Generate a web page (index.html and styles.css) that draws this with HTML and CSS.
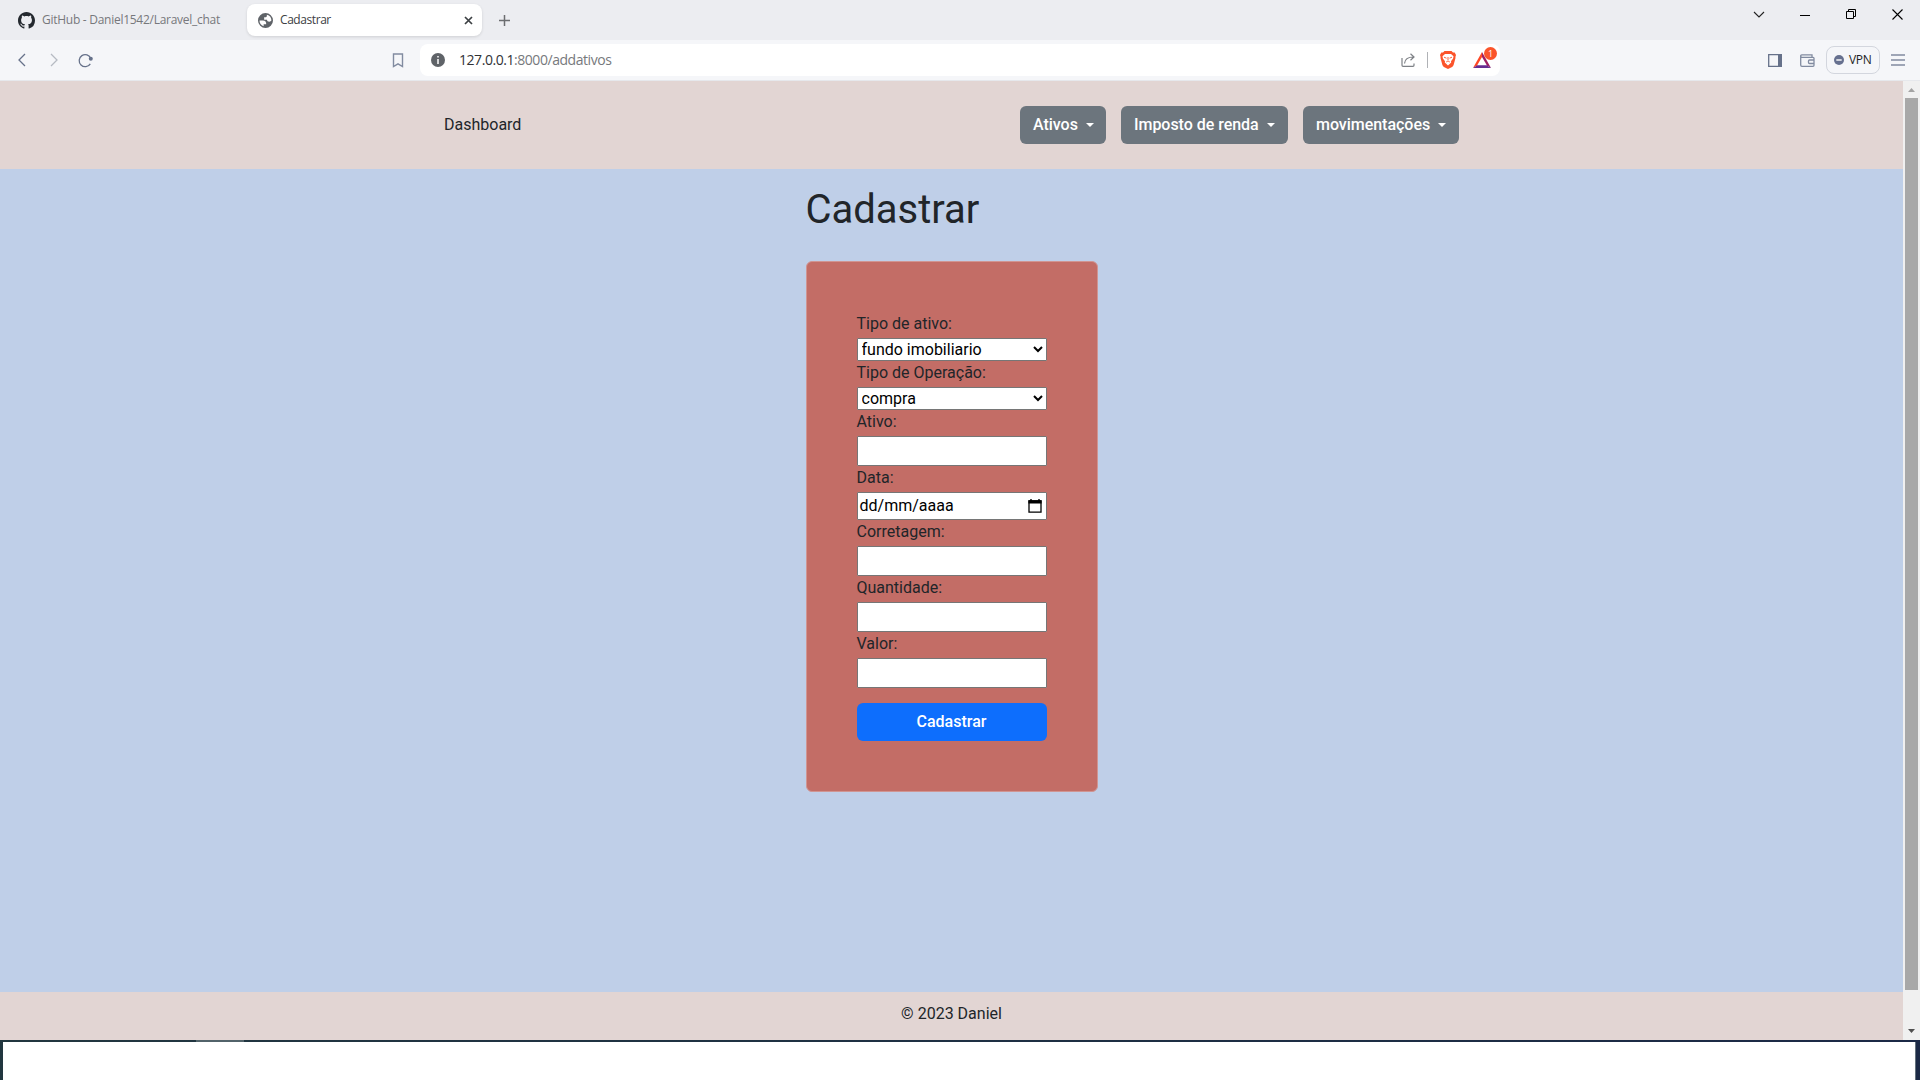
FILE: index.html
```html
<!DOCTYPE html>
<html lang="pt-BR">
<head>
<meta charset="utf-8">
<title>Cadastrar</title>
<link rel="stylesheet" href="styles.css">
</head>
<body>
<div class="tabs">
  <div class="tab tab-idle">
    <svg class="favicon" width="17" height="17" viewBox="0 0 16 16"><path fill="#24292f" d="M8 0C3.58 0 0 3.58 0 8c0 3.54 2.29 6.53 5.47 7.59.4.07.55-.17.55-.38 0-.19-.01-.82-.01-1.49-2.01.37-2.53-.49-2.69-.94-.09-.23-.48-.94-.82-1.13-.28-.15-.68-.52-.01-.53.63-.01 1.08.58 1.23.82.72 1.21 1.87.87 2.33.66.07-.52.28-.87.51-1.07-1.78-.2-3.64-.89-3.64-3.95 0-.87.31-1.59.82-2.15-.08-.2-.36-1.02.08-2.12 0 0 .67-.21 2.2.82.64-.18 1.32-.27 2-.27s1.36.09 2 .27c1.53-1.04 2.2-.82 2.2-.82.44 1.1.16 1.92.08 2.12.51.56.82 1.27.82 2.15 0 3.07-1.87 3.75-3.65 3.95.29.25.54.73.54 1.48 0 1.07-.01 1.93-.01 2.2 0 .21.15.46.55.38A8.01 8.01 0 0 0 16 8c0-4.42-3.58-8-8-8z"/></svg>
    <span class="tab-label github">GitHub - Daniel1542/Laravel_chat</span>
  </div>
  <div class="tab tab-active">
    <svg class="favicon" width="15" height="15" viewBox="2 2 20 20"><path fill="#5f6368" d="M12 2a10 10 0 1 0 0 20 10 10 0 0 0 0-20zM4 12h4.400c3.400.02 4.900 1.700 4.500 5.100H9.500v2.500A8 8 0 0 1 4 12zm15.900 0c-.6 1-1.500 1.500-2.700 1.500-2.100 0-3.200-.8-3.200-2.500h-3.800V7.500h2.400c.8 0 1.200-.5 1.200-1.400V4.300A8 8 0 0 1 19.900 12z"/></svg>
    <span class="tab-label current">Cadastrar</span>
    <svg class="tab-close" width="9" height="9" viewBox="0 0 9 9"><path d="M1 1l7 7M8 1l-7 7" stroke="#3c4043" stroke-width="1.700"/></svg>
  </div>
  <svg class="new-tab" width="11" height="11" viewBox="0 0 11 11"><path d="M5.500 0v11M0 5.500h11" stroke="#6b6d70" stroke-width="1.500"/></svg>
  <div class="window-controls">
    <svg width="12" height="11" viewBox="0 0 12 11"><path d="M1 3l5 5 5-5" fill="none" stroke="#222" stroke-width="1.100"/></svg>
    <svg width="11" height="11" viewBox="0 0 11 11"><path d="M0 6.500h10" stroke="#000"/></svg>
    <svg width="11" height="11" viewBox="0 0 11 11"><path d="M.5 2.500h7v7h-7zM2.500 2.500v-2h7v7h-2" fill="none" stroke="#000"/></svg>
    <svg width="11" height="11" viewBox="0 0 11 11"><path d="M.5.5l10 10M10.500.5l-10 10" stroke="#000" stroke-width="1.100"/></svg>
  </div>
</div>
<div class="toolbar">
  <div class="nav-icons">
    <svg width="8" height="14" viewBox="0 0 8 14"><path d="M7 1L1 7l6 6" fill="none" stroke="#66718a" stroke-width="1.300"/></svg>
    <svg width="8" height="14" viewBox="0 0 8 14"><path d="M1 1l6 6-6 6" fill="none" stroke="#b6bac3" stroke-width="1.300"/></svg>
    <svg class="reload" width="16" height="15" viewBox="0 0 16 15"><path d="M12.300 10.800A6 6 0 1 1 12.800 5.500" fill="none" stroke="#66718a" stroke-width="1.300"/><circle cx="12.800" cy="5.800" r="2" fill="#66718a"/></svg>
  </div>
  <svg class="bookmark" width="12" height="15" viewBox="0 0 12 15"><path d="M1.500 1h9v12.600L6 10.800l-4.500 2.800z" fill="none" stroke="#818ba0" stroke-width="1.400"/></svg>
  <div class="address">
    <svg class="info" width="14" height="14" viewBox="0 0 14 14"><circle cx="7" cy="7" r="7" fill="#5f6368"/><path d="M7 3v1.600M7 6v5" stroke="#fff" stroke-width="1.500"/></svg>
    <span class="url"><b>127.0.0.1</b>:8000/addativos</span>
    <svg class="share" width="15" height="14" viewBox="0 0 15 14"><path d="M1 5v7.300q0 1 1 1h10q1 0 1-1V10.500M3.500 10.500Q4 4 12.500 4M9.500.8L13 4 9.500 7.200" fill="none" stroke="#7e8186" stroke-width="1.200"/></svg>
    <span class="divider"></span>
    <svg class="brave" width="16" height="18" viewBox="0 0 16 18"><path d="M4.500 0h7l1.500 1.500 1.700-.1L16 4l-.6 2 .1 1-1.900 7q-.4 1.200-1.500 1.900L8 18l-4.100-2.100Q2.800 15.200 2.400 14L.5 7l.1-1L0 4l1.300-2.600L3 1.500z" fill="#fb542b"/><path d="M5 3h6l2.500 2.200-.4 2.400-2.100 2.600.2 1.300L8 14.600l-3.200-3.100.2-1.300-2.100-2.600-.4-2.400z" fill="#fff"/><path d="M4 6.200l2.500 1M12 6.200l-2.500 1M8 6v3M6.200 11L8 9.900l1.800 1.100" stroke="#fb542b" stroke-width=".9" fill="none"/></svg>
    <span class="bat">
      <svg width="18" height="16" viewBox="0 0 18 16"><path d="M9 0L0 16l4.200-2.700L9 5z" fill="#ff4724"/><path d="M9 0l9 16-4.200-2.700L9 5z" fill="#9e1f63"/><path d="M0 16h18l-4.200-2.700H4.200z" fill="#662d91"/></svg>
      <span class="badge">1</span>
    </span>
  </div>
  <div class="actions">
    <svg width="14" height="13" viewBox="0 0 14 13"><path d="M.7.700h12.600v11.600H.7z" fill="none" stroke="#66718a" stroke-width="1.300"/><path d="M10 0h4v13h-4z" fill="#66718a"/></svg>
    <svg class="wallet" width="15" height="13" viewBox="0 0 15 13"><path d="M12 3.200V.8H1.800Q.7.800.7 2v9q0 1.300 1.300 1.300h11q1 0 1-1v-7q0-1-1-1H2Q.7 3.300.7 2M14 6H9.500q-1 0-1 1v1.500q0 1 1 1H14" fill="none" stroke="#818ba0" stroke-width="1.300"/></svg>
    <span class="vpn"><svg width="10" height="10" viewBox="0 0 10 10"><circle cx="5" cy="5" r="5" fill="#66708f"/><path d="M2.300 5h5.400" stroke="#fff" stroke-width="1.400"/></svg>VPN</span>
    <svg width="14" height="12" viewBox="0 0 14 12"><path d="M0 1h14M0 6h14M0 11h14" stroke="#818ba0" stroke-width="1.300"/></svg>
  </div>
</div>
<div class="viewport">
  <div class="page">
    <header class="site-header">
      <a class="brand">Dashboard</a>
      <nav class="menu">
        <button class="btn w-ativos">Ativos<i class="caret"></i></button>
        <button class="btn w-imposto">Imposto de renda<i class="caret"></i></button>
        <button class="btn w-mov">movimentações<i class="caret"></i></button>
      </nav>
    </header>
    <main class="content">
      <div class="column">
        <h1>Cadastrar</h1>
        <form class="card">
          <label>Tipo de ativo:</label>
          <select class="field"><option>fundo imobiliario</option></select>
          <label>Tipo de Operação:</label>
          <select class="field"><option>compra</option></select>
          <label>Ativo:</label>
          <input class="field" type="text">
          <label>Data:</label>
          <div class="field date">dd/mm/aaaa<svg width="14" height="14" viewBox="0 0 14 14"><path d="M1 2h12v11.200H1z" fill="none" stroke="#000" stroke-width="1.300"/><path d="M.4 1.300h13.200V4.500H.4zM2.300 0h1.400v2H2.300zM10.300 0h1.400v2h-1.400z"/></svg></div>
          <label>Corretagem:</label>
          <input class="field" type="text">
          <label>Quantidade:</label>
          <input class="field" type="text">
          <label>Valor:</label>
          <input class="field" type="text">
          <button class="btn submit" type="button">Cadastrar</button>
        </form>
      </div>
    </main>
    <footer class="site-footer">© 2023 Daniel</footer>
  </div>
  <div class="scrollbar">
    <svg width="17" height="17" viewBox="0 0 17 17"><path d="M5 11l3.500-4L12 11z" fill="#a3a3a3"/></svg>
    <div class="thumb"></div>
    <svg width="17" height="17" viewBox="0 0 17 17"><path d="M5 6h7l-3.500 4z" fill="#505050"/></svg>
  </div>
</div>
<div class="below"><div class="accent"></div><div class="sheet"></div></div>
</body>
</html>
```
FILE: styles.css
```css
* { box-sizing: border-box; }
body { margin: 0; width: 1920px; height: 1080px; overflow: hidden; display: flex; flex-direction: column; font-family: Roboto, "Liberation Sans", sans-serif; font-size: 16px; line-height: 24px; color: #212529; }
svg { display: block; flex: none; }

.tabs { height: 40px; flex: none; display: flex; align-items: center; background: #ecedf1; font-family: "Open Sans", "Noto Sans", sans-serif; font-size: 12px; }
.tab { display: flex; align-items: center; height: 32px; }
.tab-idle { width: 247px; padding-left: 18px; color: #77787c; }
.tab-active { width: 235px; padding: 0 9px 0 11px; background: #fff; border-radius: 8px; box-shadow: 0 1px 3px rgba(0,0,0,.12); color: #3c4043; }
.tab-label { margin-left: 7px; white-space: nowrap; }
.github { letter-spacing: -0.270px; }
.current { letter-spacing: -0.430px; }
.tab-close { margin-left: auto; }
.new-tab { margin-left: 17px; }
.window-controls { display: flex; gap: 35px; margin-left: auto; padding: 0 17px 12px 0; }

.toolbar { height: 41px; flex: none; display: flex; align-items: center; background: #f5f6f9; border-bottom: 1px solid #e6e8ec; font-family: "Open Sans", "Noto Sans", sans-serif; }
.nav-icons { display: flex; align-items: center; gap: 24px; padding-left: 18px; }
.reload { margin-left: -4px; }
.bookmark { margin-left: 298px; }
.address { display: flex; align-items: center; width: 1080px; height: 32px; margin-left: 16px; padding: 0 9px 0 11px; background: #fff; border-radius: 8px; }
.url { margin-left: 14px; font-size: 14px; letter-spacing: -0.450px; color: #77797d; }
.url b { font-weight: 400; color: #303236; }
.share { margin-left: auto; }
.divider { width: 1px; height: 16px; margin: 0 12px 0 11px; background: #b0b2b6; }
.bat { position: relative; margin-left: 17px; }
.badge { position: absolute; left: 11px; top: -5px; width: 13px; height: 13px; border-radius: 7px; background: #fb542b; color: #fff; font-size: 9px; line-height: 13px; text-align: center; }
.actions { display: flex; align-items: center; margin-left: auto; padding-right: 15px; }
.wallet { margin: 0 11px 0 18px; }
.vpn { display: flex; align-items: center; gap: 5px; width: 54px; height: 28px; margin-right: 11px; padding-left: 7px; border: 1px solid #d3d6de; border-radius: 8px; font-size: 12px; letter-spacing: -0.300px; color: #1d1f25; }

.viewport { height: 959px; flex: none; display: flex; }
.page { flex: 1; display: flex; flex-direction: column; }
.site-header { height: 88px; display: flex; align-items: center; justify-content: space-between; padding: 0 444px; background: #e2d5d3; }
.brand { padding-bottom: 1px; }
.menu { display: flex; gap: 15px; }
.btn { display: flex; align-items: center; justify-content: center; height: 38px; padding: 0; border: 0; border-radius: 6px; background: #6c757d; color: #fff; font: 500 16px/24px Roboto, sans-serif; white-space: nowrap; }
.menu .btn { justify-content: flex-start; padding-left: 13px; letter-spacing: -0.030px; }
.caret { margin-left: 8px; border: 4px solid transparent; border-top-color: #fff; border-bottom: 0; }
.w-ativos { width: 86px; }
.w-imposto { width: 167px; }
.w-mov { width: 156px; }
.content { flex: 1; display: flex; justify-content: center; padding-top: 17px; background: #bfcfe8; }
.column { width: 292px; }
h1 { margin: 0 0 27px; font-size: 40px; font-weight: 400; line-height: 48px; }
.card { display: flex; flex-direction: column; padding: 50px; border: 1px solid #d09592; border-radius: 6px; background: #c36d66; }
label { height: 24px; margin-bottom: 2px; }
.field { width: 190px; height: 30px; margin: 0; padding: 1px 2px; border: 1px solid #767676; border-radius: 1px; background: #fff; color: #000; font: 16px/24px Roboto, sans-serif; }
select.field { height: 23px; padding: 0 1px 0 0; }
.date { display: flex; align-items: center; justify-content: space-between; height: 28px; padding-right: 4px; }
.submit { margin-top: 15px; background: #0d6efd; }
.site-footer { height: 48px; padding-top: 10px; background: #e2d5d3; text-align: center; }
.scrollbar { width: 17px; display: flex; flex-direction: column; background: #f0f0f0; }
.thumb { width: 13px; height: 892px; margin: 0 auto auto 2px; background: #a8a8a8; }

.below { flex: 1; display: flex; flex-direction: column; padding: 0 4px 0 3px; background: linear-gradient(90deg, #21363f, #1b2946); }
.accent { width: 48px; height: 2px; margin-left: 193px; background: #52636a; }
.sheet { flex: 1; background: #fff; border-right: 1px solid #63717c; }
```
